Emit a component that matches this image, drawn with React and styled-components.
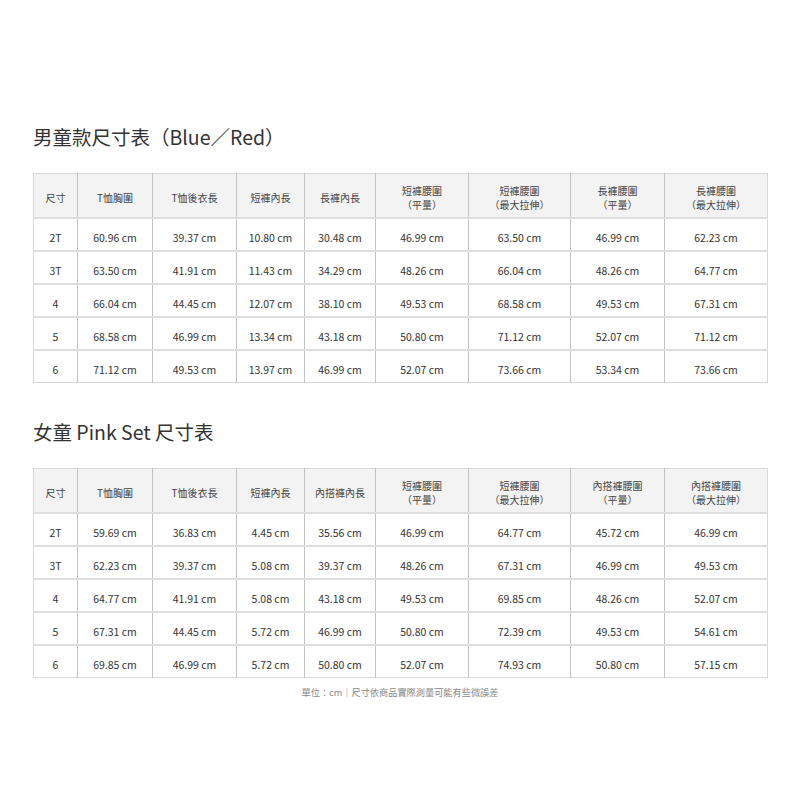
import React from "react";
import styled, { createGlobalStyle } from "styled-components";

const GlobalStyle = createGlobalStyle`
  body {
    margin: 0;
    background: #fff;
    font-family: "Noto Sans CJK TC", "Noto Sans", sans-serif;
  }
`;

const Page = styled.div`
  width: 734px;
  padding: 123px 0 0 33px;
`;

const Title = styled.h2`
  margin: 0 0 22px;
  font-size: 19.5px;
  line-height: 28px;
  font-weight: 400;
  color: #333;
`;

const Section = styled.section`
  & + & {
    margin-top: 35px;
  }
`;

const Table = styled.table`
  width: 734px;
  table-layout: fixed;
  border-collapse: collapse;
  border: 1px solid #d8d8d8;
`;

const HeadCell = styled.th`
  height: 44px;
  padding: 5px 2px 0;
  box-sizing: border-box;
  background: #f3f3f3;
  border-left: 1px solid #c4c4c4;
  border-bottom: 2px solid #dedede;
  font-size: 10px;
  line-height: 14px;
  font-weight: 400;
  color: #444;
  text-align: center;
  &:first-child {
    border-left: none;
  }
`;

const HeadLine = styled.div`
  white-space: nowrap;
`;

const Cell = styled.td`
  height: 33px;
  padding: 7px 2px 0;
  box-sizing: border-box;
  border-left: 1px solid #c4c4c4;
  border-top: 2px solid #dedede;
  font-size: 10.5px;
  line-height: 14px;
  color: #333;
  text-align: center;
  &:first-child {
    border-left: none;
  }
`;

const Note = styled.p`
  margin: 7px 0 0;
  font-size: 9.2px;
  line-height: 14px;
  color: #888;
  text-align: center;
`;

const widths = [44, 75, 84, 68, 71, 93, 102, 94, 103];

const boys = {
  title: "男童款尺寸表（Blue／Red）",
  heads: [
    "尺寸", "T恤胸圍", "T恤後衣長", "短褲內長", "長褲內長",
    "短褲腰圍\n（平量）", "短褲腰圍\n（最大拉伸）", "長褲腰圍\n（平量）", "長褲腰圍\n（最大拉伸）",
  ],
  rows: [
    ["2T", "60.96", "39.37", "10.80", "30.48", "46.99", "63.50", "46.99", "62.23"],
    ["3T", "63.50", "41.91", "11.43", "34.29", "48.26", "66.04", "48.26", "64.77"],
    ["4", "66.04", "44.45", "12.07", "38.10", "49.53", "68.58", "49.53", "67.31"],
    ["5", "68.58", "46.99", "13.34", "43.18", "50.80", "71.12", "52.07", "71.12"],
    ["6", "71.12", "49.53", "13.97", "46.99", "52.07", "73.66", "53.34", "73.66"],
  ],
};

const girls = {
  title: "女童 Pink Set 尺寸表",
  heads: [
    "尺寸", "T恤胸圍", "T恤後衣長", "短褲內長", "內搭褲內長",
    "短褲腰圍\n（平量）", "短褲腰圍\n（最大拉伸）", "內搭褲腰圍\n（平量）", "內搭褲腰圍\n（最大拉伸）",
  ],
  rows: [
    ["2T", "59.69", "36.83", "4.45", "35.56", "46.99", "64.77", "45.72", "46.99"],
    ["3T", "62.23", "39.37", "5.08", "39.37", "48.26", "67.31", "46.99", "49.53"],
    ["4", "64.77", "41.91", "5.08", "43.18", "49.53", "69.85", "48.26", "52.07"],
    ["5", "67.31", "44.45", "5.72", "46.99", "50.80", "72.39", "49.53", "54.61"],
    ["6", "69.85", "46.99", "5.72", "50.80", "52.07", "74.93", "50.80", "57.15"],
  ],
};

const SizeTable = ({ data }) => (
  <Section>
    <Title>{data.title}</Title>
    <Table>
      <colgroup>
        {widths.map((w, i) => <col key={i} style={{ width: w }} />)}
      </colgroup>
      <thead>
        <tr>
          {data.heads.map((h) => (
            <HeadCell key={h}>
              {h.split("\n").map((line, i) => <HeadLine key={i}>{line}</HeadLine>)}
            </HeadCell>
          ))}
        </tr>
      </thead>
      <tbody>
        {data.rows.map((row) => (
          <tr key={row[0]}>
            {row.map((v, i) => (
              <Cell key={i}>{i === 0 ? v : v + " cm"}</Cell>
            ))}
          </tr>
        ))}
      </tbody>
    </Table>
  </Section>
);

const App = () => (
  <>
    <GlobalStyle />
    <Page>
      <SizeTable data={boys} />
      <SizeTable data={girls} />
      <Note>單位：cm｜尺寸依商品實際測量可能有些微誤差</Note>
    </Page>
  </>
);

export default App;
